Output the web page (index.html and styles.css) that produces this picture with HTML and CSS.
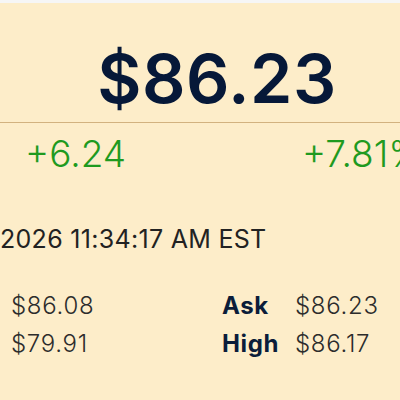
FILE: index.html
```html
<!DOCTYPE html>
<html>
<head>
<meta charset="utf-8">
<link rel="stylesheet" href="styles.css">
</head>
<body>
<div class="topbar"></div>
<section class="quote">
  <div class="price-block">
    <div class="price">$86.23</div>
  </div>
  <div class="details">
    <div class="change">
      <span class="chg">+6.24</span>
      <span class="chg">+7.81%</span>
    </div>
    <div class="time">2026 11:34:17 AM EST</div>
    <div class="stats">
      <span class="val">$86.08</span>
      <span class="lbl">Ask</span>
      <span class="val">$86.23</span>
      <span class="val">$79.91</span>
      <span class="lbl">High</span>
      <span class="val">$86.17</span>
    </div>
  </div>
</section>
</body>
</html>
```
FILE: styles.css
```css
html, body {
  margin: 0;
  padding: 0;
}
body {
  width: 400px;
  height: 400px;
  overflow: hidden;
  background: #fdedc9;
  font-family: Inter, "Liberation Sans", Arial, sans-serif;
}
.topbar {
  height: 3px;
  background: #f6f6f6;
}
.quote {
  width: 400px;
}
.price-block {
  height: 120px;
  box-sizing: border-box;
  padding: 41px 0 0 34px;
  text-align: center;
  border-bottom: 1px solid #d2b27f;
}
.price {
  font-size: 68px;
  line-height: 68px;
  font-weight: 600;
  color: #061838;
  letter-spacing: 0.5px;
}
.details {
  height: 268px;
  box-sizing: border-box;
  border-bottom: 2px solid #d2b27f;
  white-space: nowrap;
}
.change {
  display: grid;
  grid-template-columns: 277px auto;
  padding-left: 25px;
  margin-top: 11px;
}
.chg {
  font-size: 37px;
  line-height: 40px;
  font-weight: 300;
  color: #1f9a1f;
}
.time {
  margin-top: 53px;
  font-size: 25px;
  line-height: 24px;
  color: #222;
  letter-spacing: 0.3px;
}
.stats {
  display: grid;
  grid-template-columns: 211px 73px auto;
  grid-auto-rows: 38px;
  align-items: center;
  padding-left: 11px;
  margin-top: 35px;
  font-size: 24px;
  letter-spacing: 0.7px;
}
.val {
  color: #2c2c2c;
  font-weight: 300;
}
.lbl {
  font-weight: 700;
  color: #0b1d3a;
  letter-spacing: 0.6px;
}
```
